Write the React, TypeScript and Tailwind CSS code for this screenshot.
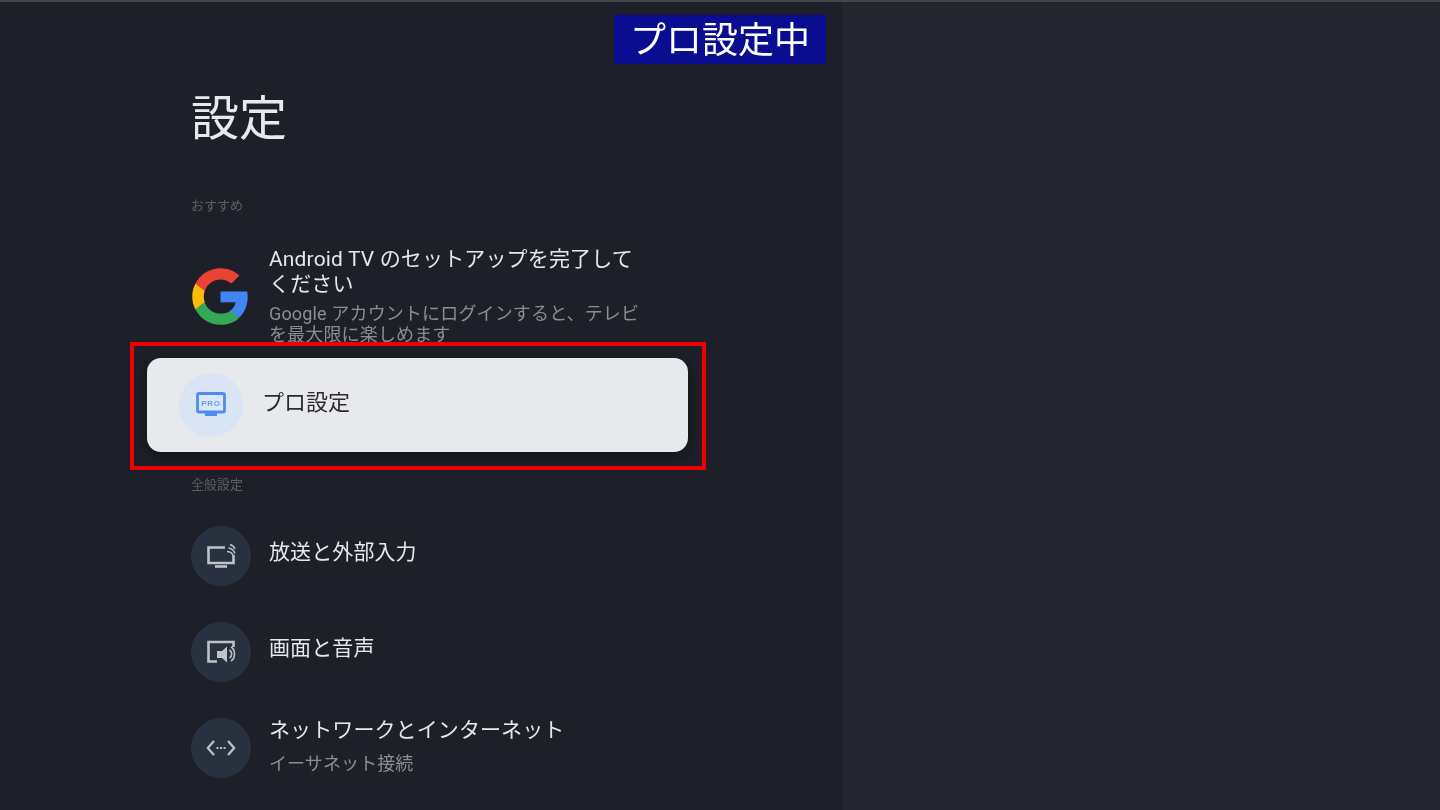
import React from "react";

const font = { fontFamily: 'Roboto, "Noto Sans CJK JP", "Noto Sans", sans-serif' };

function GoogleG() {
  return (
    <svg width="59" height="59" viewBox="0 0 48 48">
      <path fill="#4285F4" d="M46.1 24.5c0-1.6-.1-3.100-.4-4.500H24v8.700h12.400c-.5 2.900-2.200 5.300-4.600 6.900v5.700h7.400c4.300-4 6.900-9.900 6.900-16.800z" />
      <path fill="#34A853" d="M24 47c6.200 0 11.400-2.100 15.200-5.600l-7.400-5.700c-2.100 1.400-4.700 2.200-7.800 2.200-6 0-11.100-4-12.900-9.500H3.500v5.900C7.300 41.800 15 47 24 47z" />
      <path fill="#FBBC05" d="M11.100 28.400c-.5-1.400-.7-2.900-.7-4.400s.3-3 .7-4.400v-5.900H3.500C2 16.700 1 20.200 1 24s.9 7.300 2.500 10.300l7.600-5.900z" />
      <path fill="#EA4335" d="M24 10.100c3.400 0 6.400 1.200 8.800 3.400l6.600-6.600C35.400 3.200 30.200 1 24 1 15 1 7.300 6.200 3.500 13.700l7.600 5.900c1.800-5.500 6.900-9.500 12.900-9.500z" />
    </svg>
  );
}

function ProIcon() {
  return (
    <svg width="30" height="26" viewBox="0 0 30 26">
      <rect x="1.500" y="1.500" width="27" height="18.500" rx="1.500" fill="#dbe6f8" stroke="#4f8bf0" strokeWidth="2.800" />
      <rect x="9" y="21" width="12" height="3" fill="#4f8bf0" />
      <text x="15" y="14" textAnchor="middle" fontSize="8" fontWeight="700" fill="#6a9cf0" letterSpacing="0.800" fontFamily="Liberation Sans, sans-serif">PRO</text>
    </svg>
  );
}

function BroadcastIcon() {
  return (
    <svg width="30" height="26" viewBox="0 0 30 26" fill="none" stroke="#bfc2c7">
      <path d="M19 4.500H2.500v15.500h25v-8" strokeWidth="2.600" />
      <path d="M9 23.500h12" strokeWidth="2.600" />
      <path d="M21 8.500c3.500.2 5.300 1.700 6 4M22.500 5c3 .5 5.500 2.500 6.300 5.500M24 1.500c2 .5 4 2 5 4.500" strokeWidth="1.500" />
    </svg>
  );
}

function ScreenSoundIcon() {
  return (
    <svg width="30" height="26" viewBox="0 0 30 26" fill="none">
      <path d="M11 22.500H2.500V3h25v5" stroke="#bfc2c7" strokeWidth="2.600" />
      <path d="M11 12h5l5-4.500v16L16 19h-5z" fill="#bfc2c7" />
      <path d="M23.500 11c1.600 1 2.200 2.200 2.200 4s-.6 3-2.200 4M25 8c2.500 1.500 3.500 4 3.500 7s-1 5.500-3.500 7" stroke="#bfc2c7" strokeWidth="1.600" />
    </svg>
  );
}

function EthernetIcon() {
  return (
    <svg width="30" height="18" viewBox="0 0 30 18" fill="none" stroke="#bfc2c7" strokeWidth="2.200">
      <path d="M8 2 1.800 9 8 16M22 2l6.200 7-6.200 7" />
      <path d="M10.500 9h2M14 9h2M17.500 9h2" strokeWidth="2" />
    </svg>
  );
}

function IconRow({ icon, title, sub }: { icon: React.ReactNode; title: string; sub?: string }) {
  return (
    <div className="flex h-[96px] items-center gap-[18px]">
      <div className="flex h-[60px] w-[60px] shrink-0 items-center justify-center rounded-full bg-[#27313f]">{icon}</div>
      <div className={sub ? "mb-[3px] flex flex-col" : "mb-[8px] flex flex-col"}>
        <span className="text-[21px] leading-[28px] tracking-[0.1px] text-[#e6e7ea]">{title}</span>
        {sub && <span className="mt-[7px] text-[18px] leading-[26px] tracking-[0.1px] text-[#8b8e95]">{sub}</span>}
      </div>
    </div>
  );
}

export default function App() {
  return (
    <div className="relative flex h-[810px] w-[1440px] overflow-hidden border-t-2 border-[#44464c] bg-[#23262e]" style={font}>
      <div className="flex w-[842px] shrink-0 flex-col overflow-hidden bg-[#1e2029] pl-[191px] blur-[0.6px]">
        <h1 className="mt-[89px] text-[48px] font-normal leading-[56px] text-[#e8e9eb]">設定</h1>
        <p className="mt-[50px] text-[13px] leading-[18px] text-[#5c5f66]">おすすめ</p>
        <div className="mt-[32px] flex h-[97px] w-[460px] items-start gap-[19px]">
          <div className="mt-[20px] shrink-0"><GoogleG /></div>
          <div className="flex w-[376px] flex-col">
            <span className="text-[21px] leading-[25px] tracking-[0.15px] text-[#e6e7ea]">Android TV のセットアップを完了してください</span>
            <span className="mt-[6px] text-[18px] leading-[21px] tracking-[0.15px] text-[#8b8e95]">Google アカウントにログインすると、テレビを最大限に楽しめます</span>
          </div>
        </div>
        <div className="relative -ml-[44px] mt-[14px] flex h-[94px] w-[541px] shrink-0 items-center gap-[19px] rounded-[14px] bg-[#e8e9ed] pl-[32px] shadow-[0_4px_16px_rgba(0,0,0,0.45)]">
          <div className="flex h-[64px] w-[64px] items-center justify-center rounded-full bg-[#d9e4f4]"><ProIcon /></div>
          <span className="mb-[6px] text-[22px] text-[#2a2b2e]">プロ設定</span>
        </div>
        <p className="mt-[24px] text-[13px] leading-[18px] text-[#5c5f66]">全般設定</p>
        <div className="mt-[14px] flex flex-col">
          <IconRow icon={<BroadcastIcon />} title="放送と外部入力" />
          <IconRow icon={<ScreenSoundIcon />} title="画面と音声" />
          <IconRow icon={<EthernetIcon />} title="ネットワークとインターネット" sub="イーサネット接続" />
        </div>
      </div>
      <div className="absolute left-[614px] top-[13px] flex h-[49px] w-[212px] items-center justify-center bg-[#0a0d8f] pt-[3px] text-[36px] text-white blur-[0.4px]">プロ設定中</div>
      <div className="absolute left-[130px] top-[340px] h-[128px] w-[576px] border-[4px] border-[#f00000]" />
    </div>
  );
}
